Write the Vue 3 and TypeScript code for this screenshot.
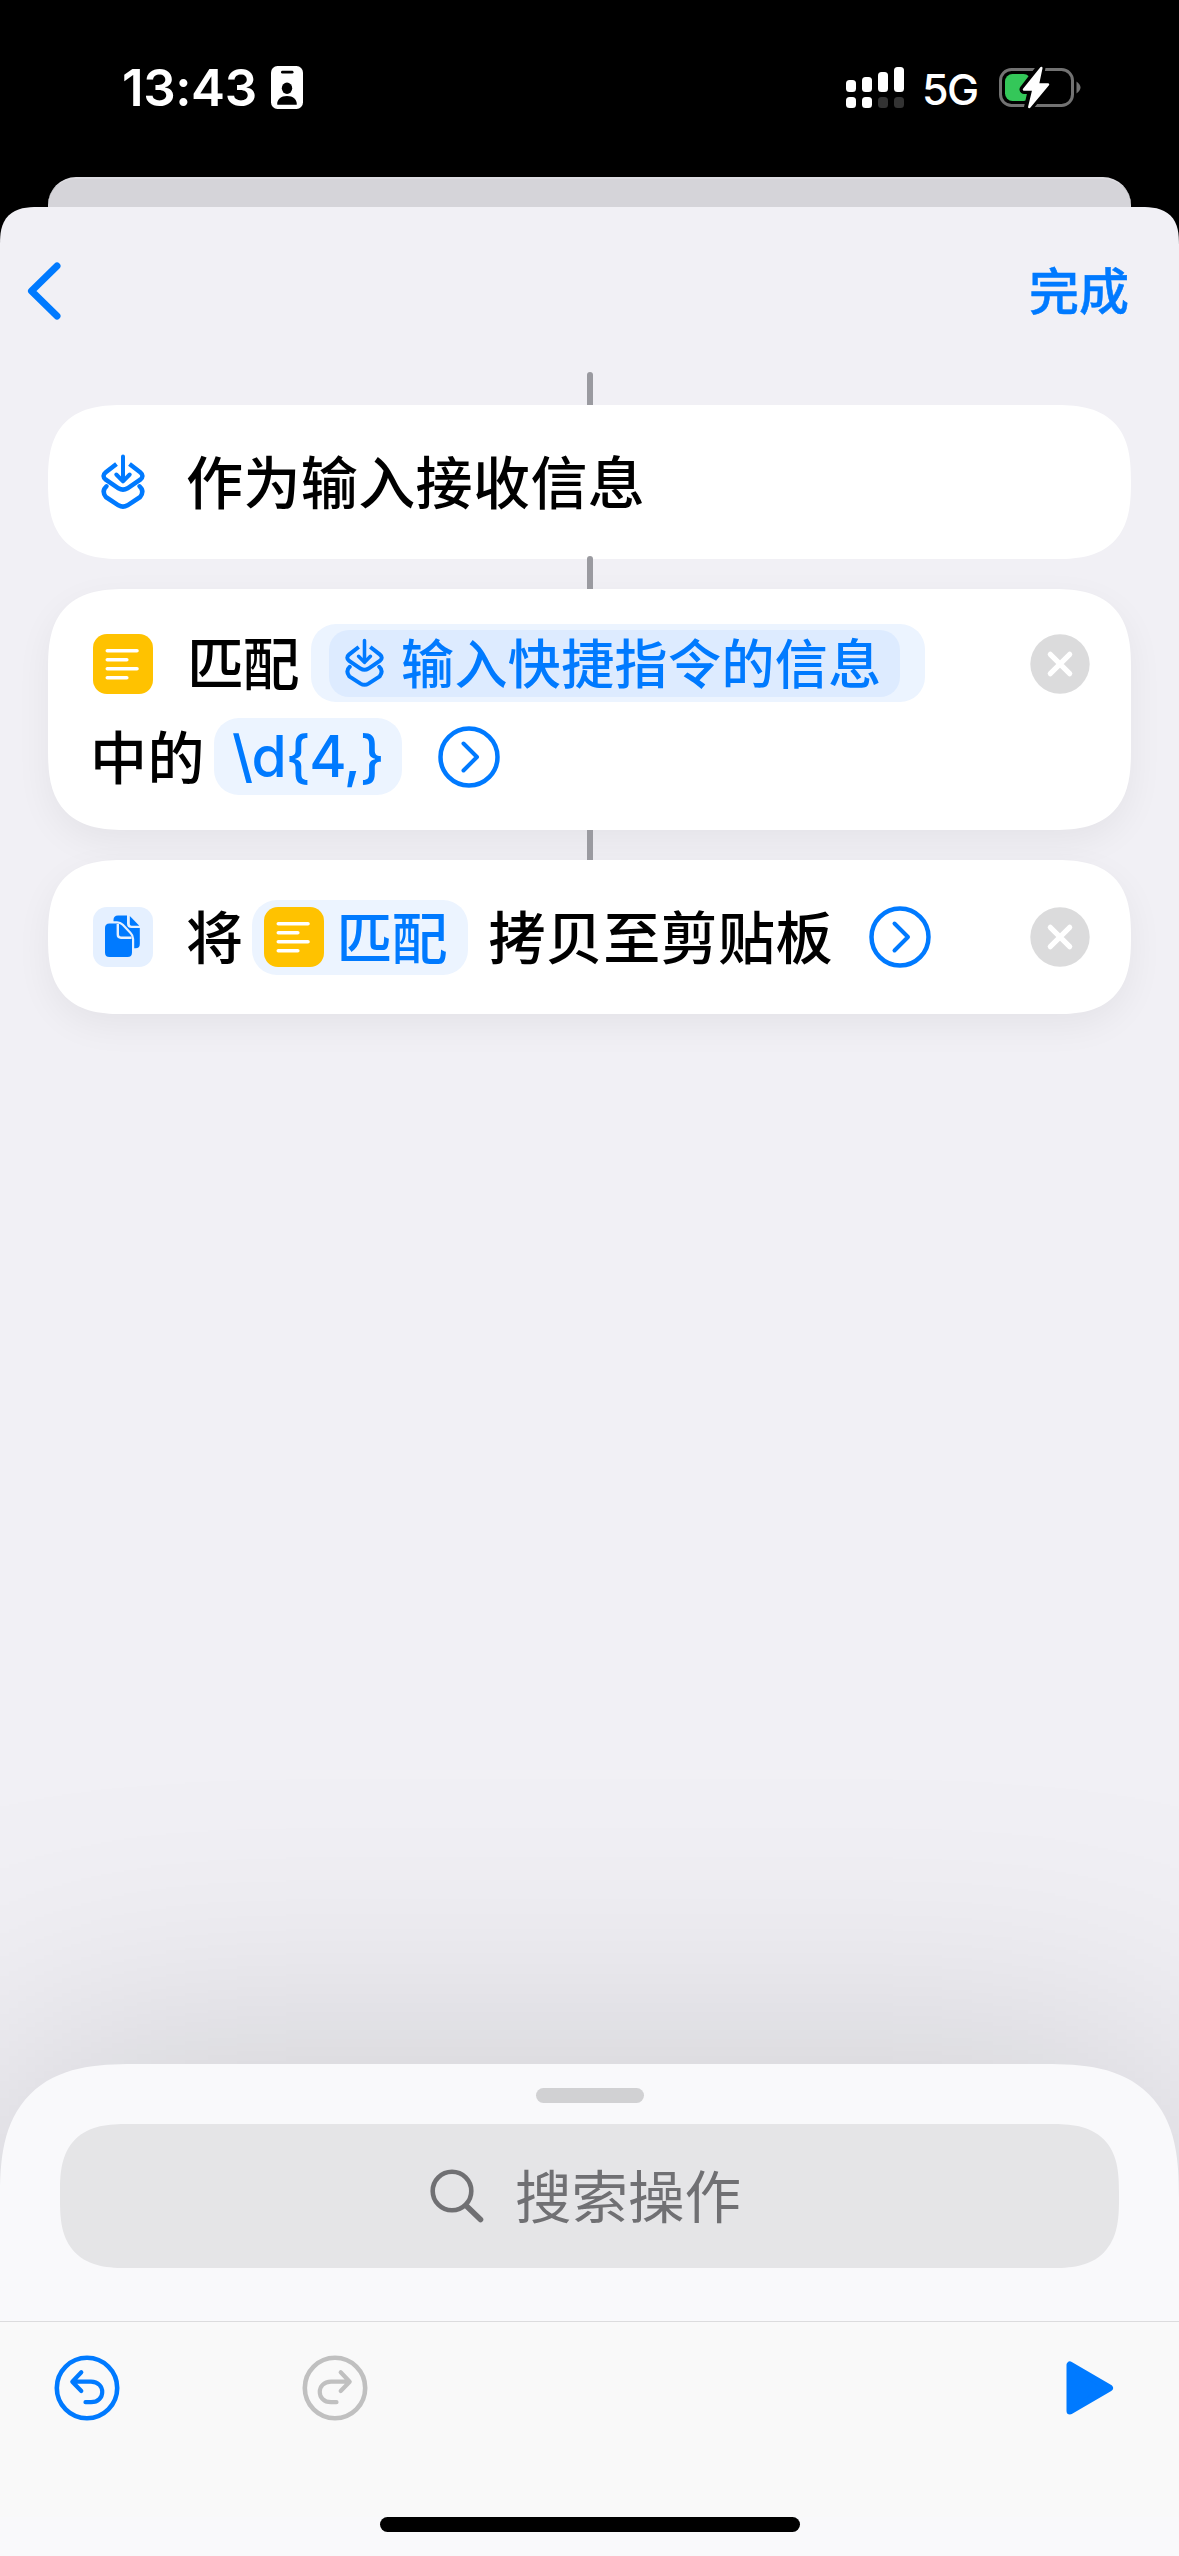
<script setup lang="ts">
import { h, type FunctionalComponent } from 'vue'

interface SignalBar { height: number; active: boolean }

const signalBars: SignalBar[] = [
  { height: 12, active: true },
  { height: 15, active: true },
  { height: 20, active: false },
  { height: 25, active: false },
]

const stroke = (d: string, width: number) =>
  h('path', { d, fill: 'none', stroke: 'currentColor', 'stroke-width': width, 'stroke-linecap': 'round', 'stroke-linejoin': 'round' })

const ShortcutInput: FunctionalComponent = () =>
  h('svg', { viewBox: '0 0 44 56' }, [
    h('path', {
      d: 'M15.5 10 L4.8 18.3 Q0.3 22 4.8 25.7 L17.5 34.3 Q22 37 26.5 34.3 L39.2 25.7 Q43.7 22 39.2 18.3 L28.5 10',
      fill: 'none', stroke: 'currentColor', 'stroke-width': 4.5,
    }),
    stroke('M5.4 32.3 Q0.3 37 4.8 43 L17.5 51.3 Q22 54 26.5 51.3 L39.2 43 Q43.7 37 38.6 32.3', 4.5),
    stroke('M22 2.5 V27 M15.3 20.5 L22 27.3 L28.7 20.5', 4),
  ])

const TextLines: FunctionalComponent = () =>
  h('svg', { viewBox: '0 0 60 60' }, [stroke('M14.3 16.7 H44 M14.3 25.7 H33.8 M14.3 34.7 H44 M14.3 43.8 H33.8', 3.6)])

const DisclosureCircle: FunctionalComponent = () =>
  h('svg', { viewBox: '0 0 62 62' }, [
    h('circle', { cx: 31, cy: 31, r: 28.5, fill: 'none', stroke: 'currentColor', 'stroke-width': 4.5 }),
    stroke('M25.5 17.5 L39 31 L25.5 44.5', 4),
  ])

const RemoveCircle: FunctionalComponent = () =>
  h('svg', { viewBox: '0 0 60 60' }, [
    h('circle', { cx: 30, cy: 30, r: 29.7, fill: '#dbdbdc' }),
    h('path', { d: 'M20.3 20.3 L39.7 39.7 M39.7 20.3 L20.3 39.7', stroke: '#fff', 'stroke-width': 5.2, 'stroke-linecap': 'round' }),
  ])

const UndoCircle: FunctionalComponent = () =>
  h('svg', { viewBox: '0 0 66 66' }, [
    h('circle', { cx: 33, cy: 33, r: 30.2, fill: 'none', stroke: 'currentColor', 'stroke-width': 4.6 }),
    stroke('M27.3 17.3 L18.3 26.7 L27.3 36 M18.8 26.7 H37 C52 26.7 52 47.2 37 47.2 H31.5', 4.2),
  ])
</script>

<template>
  <div class="screen">
    <header class="status">
      <span class="clock">13:43</span>
      <svg class="badge" viewBox="0 0 32 43">
        <rect width="32" height="43" rx="6.5" fill="#fff" />
        <rect x="10" y="4.8" width="12.5" height="2.8" rx="1.4" />
        <ellipse cx="16" cy="22.3" rx="5.2" ry="5.7" />
        <path d="M6.2 38.2 C6 33.5 10 30 16 30 S26 33.5 25.8 38.2 Q25.8 38.7 25 38.7 H7 Q6.2 38.7 6.2 38.2Z" />
      </svg>
      <div class="signal">
        <div v-for="(bar, i) in signalBars" :key="i" class="signal-col">
          <i class="bar" :style="{ height: bar.height + 'px' }"></i>
          <i class="dot" :class="{ off: !bar.active }"></i>
        </div>
      </div>
      <span class="network">5G</span>
      <svg class="battery" viewBox="0 0 84 44">
        <rect x="2.5" y="4.5" width="72" height="36" rx="11" fill="none" stroke="#727272" stroke-width="3" />
        <path d="M78.5 16.5 Q82.5 19.5 82.5 22.5 T78.5 28.5Z" fill="#727272" />
        <rect x="7" y="9" width="26" height="27" rx="7.5" fill="#34c759" />
        <path d="M43 2.5 L26 24.5 H34.5 L30.5 42.5 L49.5 19.5 H39.5Z" fill="#fff" stroke="#000" stroke-width="9" stroke-linejoin="round" />
        <path d="M43.3 3 L26 24.5 H35.5 L31.3 42 L50 19.5 H39.8Z" fill="#fff" stroke="#fff" stroke-width="2.5" stroke-linejoin="round" />
      </svg>
    </header>

    <div class="back-sheet"></div>

    <main class="sheet">
      <nav class="nav">
        <svg class="back" viewBox="0 0 36 60"><path d="M31 5 L5.5 30 L31 55" fill="none" stroke="#007aff" stroke-width="7" stroke-linecap="round" stroke-linejoin="round" /></svg>
        <span class="done">完成</span>
      </nav>

      <div class="flow">
        <i class="link first"></i>
        <section class="card">
          <div class="row single">
            <ShortcutInput class="input-icon" />
            <span class="label">作为输入接收信息</span>
          </div>
        </section>
        <i class="link lapped"></i>
        <section class="card raised">
          <div class="row">
            <span class="tile yellow drop"><TextLines /></span>
            <span class="label lead tight">匹配</span>
            <span class="token source">
              <span class="variable"><ShortcutInput class="variable-icon" /><span class="variable-text">输入快捷指令的信息</span></span>
            </span>
            <RemoveCircle class="remove drop" />
          </div>
          <div class="row second">
            <span class="label tail">中的</span>
            <span class="token pattern">\d{4,}</span>
            <DisclosureCircle class="disclose near" />
          </div>
        </section>
        <i class="link short"></i>
        <section class="card raised">
          <div class="row single">
            <span class="tile pale">
              <svg viewBox="0 0 60 60">
                <path d="M20.5 16 V13 Q20.5 8.5 25 8.5 H34 V16.5 Q34 21 38.5 21 H46.8 V37 Q46.8 41.3 42.5 41.3 H29 V16Z" fill="#007aff" />
                <path d="M36.8 9 L46.3 18.7 H38.5 Q36.8 18.7 36.8 17Z" fill="#007aff" />
                <path d="M16.5 16.5 H24 Q27 16.5 29 18.5 L37 27 Q39 29 39 32 V45.5 Q39 50 34.5 50 H16.5 Q12 50 12 45.5 V21 Q12 16.5 16.5 16.5Z" fill="#007aff" stroke="#e5f0ff" stroke-width="4.4" paint-order="stroke" />
                <path d="M24.8 17 V27.5 Q24.8 30.7 28 30.7 H38.5" fill="none" stroke="#e5f0ff" stroke-width="2.4" />
              </svg>
            </span>
            <span class="label lead">将</span>
            <span class="token match"><span class="tile yellow"><TextLines /></span><span class="match-text">匹配</span></span>
            <span class="label copy">拷贝至剪贴板</span>
            <DisclosureCircle class="disclose far" />
            <RemoveCircle class="remove" />
          </div>
        </section>
      </div>

      <footer class="drawer">
        <i class="handle"></i>
        <div class="search">
          <svg class="glass" viewBox="0 0 54 54"><circle cx="22" cy="22" r="19.3" fill="none" stroke="#707073" stroke-width="4.6" /><path d="M36 36.5 L50.5 50.5" stroke="#707073" stroke-width="5.6" stroke-linecap="round" /></svg>
          <span class="placeholder">搜索操作</span>
        </div>
        <div class="toolbar">
          <UndoCircle class="tool undo" />
          <UndoCircle class="tool redo" />
          <svg class="play" viewBox="0 0 48 56"><path d="M4 5 V51 L43.5 28Z" fill="#007aff" stroke="#007aff" stroke-width="7" stroke-linejoin="round" /></svg>
        </div>
        <i class="home"></i>
      </footer>
    </main>
  </div>
</template>

<style>
body { background: #000; }
</style>

<style scoped>
* { box-sizing: border-box; }
i, svg { display: block; flex: none; }
span { white-space: nowrap; }

.screen {
  width: 1179px;
  height: 2556px;
  display: flex;
  flex-direction: column;
  overflow: hidden;
  background: #000;
  color: #000;
  font-family: "Noto Sans CJK SC", sans-serif;
}

.status {
  height: 177px;
  flex: none;
  display: flex;
  align-items: flex-start;
  color: #fff;
  font-family: Inter, sans-serif;
}
.clock { width: 149px; margin: 58px 0 0 122px; font-size: 51px; line-height: 60px; font-weight: 600; letter-spacing: -0.4px; }
.badge { width: 32px; height: 43px; margin-top: 66px; }
.signal { display: flex; gap: 6px; margin: 67px 0 0 543px; }
.signal-col { height: 41px; width: 10px; display: flex; flex-direction: column; justify-content: flex-end; gap: 5px; }
.bar { background: #fff; border-radius: 3.5px; }
.dot { height: 11px; background: #fff; border-radius: 3.5px; }
.dot.off { background: #333; }
.network { width: 75px; margin: 63px 0 0 18px; font-size: 43px; line-height: 52px; font-weight: 500; letter-spacing: -1.5px; }
.battery { width: 84px; height: 44px; margin: 65px 0 0 1px; }

.back-sheet {
  height: 30px;
  margin: 0 48px;
  flex: none;
  background: #d5d4d9;
  border-radius: 28px 28px 0 0;
  border-top: 2px solid #dddce1;
}

.sheet {
  flex: 1;
  min-height: 0;
  display: flex;
  flex-direction: column;
  overflow: hidden;
  background: #f1f0f5;
  border-radius: 30px 30px 0 0;
}
.nav { height: 165px; flex: none; display: flex; justify-content: space-between; padding: 0 50px 0 26px; }
.back { width: 36px; height: 60px; margin-top: 54px; }
.done { margin-top: 46px; font-size: 50px; line-height: 70px; font-weight: 500; color: #007aff; -webkit-text-stroke: 0.5px #007aff; }

.flow { flex: 1; display: flex; flex-direction: column; padding: 0 48px; position: relative; z-index: 1; }
.link { width: 6px; height: 33px; margin-left: 539px; background: #9a9aa0; z-index: 1; }
.link.first { border-radius: 3px 3px 0 0; }
.link.lapped { margin-top: -3px; border-radius: 3px 3px 0 0; }
.link.short { height: 30px; }

.card { flex: none; background: #fff; border-radius: 62px; padding: 35px 41px 35px 45px; }
.card.raised { box-shadow: 0 12px 36px rgba(0, 0, 0, 0.055); }
.row { height: 78px; display: flex; align-items: center; }
.row.single { height: 84px; }
.row.second { height: 77px; margin-top: 16px; }

.label { font-size: 57px; line-height: 70px; font-weight: 500; letter-spacing: 0.4px; position: relative; top: -3px; }
.input-icon { width: 44px; height: 56px; margin: 0 41px 0 8px; color: #007aff; }
.lead { margin-left: 33px; }
.label.tight { width: 116px; letter-spacing: -1.5px; margin-left: 34px; }
.tile { width: 60px; height: 60px; flex: none; border-radius: 14px; }
.tile svg { width: 60px; height: 60px; }
.drop { position: relative; top: 1px; }
.yellow { background: #ffc200; color: #fff; }
.pale { background: #e5f0ff; }

.token { flex: none; display: flex; align-items: center; background: #ecf4ff; color: #007aff; border-radius: 25px; }
.source { width: 614px; height: 78px; margin-left: 8px; padding-left: 18px; }
.variable { width: 571px; height: 67px; display: flex; align-items: center; background: #ddebff; border-radius: 20px; }
.variable-icon { width: 39px; height: 50px; margin: 0 17px 0 16px; }
.variable-text { font-size: 53px; line-height: 66px; font-weight: 500; letter-spacing: 0.4px; position: relative; top: -2px; }
.remove { width: 60px; height: 60px; margin-left: auto; }

.tail { margin-left: -3px; }
.pattern { width: 188px; height: 77px; margin-left: 9px; justify-content: center; font-family: Inter, sans-serif; font-size: 57px; font-weight: 500; letter-spacing: -1.2px; }
.disclose { width: 62px; height: 62px; color: #007aff; }
.near { margin-left: 36px; }
.far { margin-left: 36px; }

.match { width: 216px; height: 75px; margin-left: 9px; padding-left: 12px; }
.match-text { margin-left: 12px; font-size: 56px; line-height: 70px; font-weight: 500; letter-spacing: -1px; position: relative; top: -2px; }
.copy { margin-left: 20px; }

.drawer {
  position: relative;
  z-index: 0;
  height: 492px;
  flex: none;
  display: flex;
  flex-direction: column;
}
.drawer::before,
.drawer::after {
  content: "";
  position: absolute;
  inset: 0;
}
.drawer::before {
  z-index: -2;
  background: rgba(0, 0, 0, 0.16);
  filter: blur(140px);
}
.drawer::after {
  z-index: -1;
  background: #f9f9fb;
  border-radius: 105px 105px 0 0;
}
.handle { width: 108px; height: 15px; margin: 24px auto 21px; border-radius: 8px; background: #d1d1d3; }
.search {
  height: 144px;
  margin: 0 60px;
  flex: none;
  display: flex;
  align-items: center;
  background: #e5e5e7;
  border-radius: 52px;
}
.glass { width: 54px; height: 54px; margin-left: 370px; }
.placeholder { margin-left: 31px; font-size: 56.5px; line-height: 70px; letter-spacing: 0; color: #707073; position: relative; top: -3px; }
.toolbar {
  height: 196px;
  flex: none;
  margin-top: 53px;
  display: flex;
  align-items: flex-start;
  border-top: 1px solid #dcdcde;
  background: #f9f9f9;
  padding: 32.5px 65px 0 53.5px;
}
.tool { width: 66px; height: 66px; color: #007aff; }
.redo { margin-left: 182px; color: #c0c0c0; transform: scaleX(-1); }
.play { width: 48px; height: 56px; margin: 5.5px 0 0 auto; }
.home { width: 420px; height: 15px; margin: 0 auto; border-radius: 8px; background: #000; }

@supports (corner-shape: superellipse(1.4)) {
  .card { border-radius: 80px; corner-shape: superellipse(1.44); }
  .drawer::after { border-radius: 134px 134px 0 0; corner-shape: superellipse(1.44); }
  .search { border-radius: 68px; corner-shape: superellipse(1.44); }
  .sheet { border-radius: 38px 38px 0 0; corner-shape: superellipse(1.44); }
}
</style>
